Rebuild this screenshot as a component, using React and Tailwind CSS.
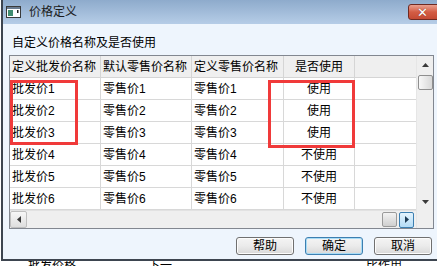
import React from 'react';

const rows = [
  ['批发价1', '零售价1', '零售价1', '使用'],
  ['批发价2', '零售价2', '零售价2', '使用'],
  ['批发价3', '零售价3', '零售价3', '使用'],
  ['批发价4', '零售价4', '零售价4', '不使用'],
  ['批发价5', '零售价5', '零售价5', '不使用'],
  ['批发价6', '零售价6', '零售价6', '不使用'],
];

const cols = ['w-[91px]', 'w-[91px]', 'w-[92px]', 'w-[71px]'];

const WinIcon = () => (
  <svg width="15" height="12" viewBox="0 0 15 12">
    <rect x="0.5" y="0.5" width="14" height="11" fill="#fff" stroke="#3a3a3a" />
    <rect x="1" y="1" width="13" height="2" fill="#6a7c90" />
    <rect x="2" y="4" width="5" height="6" fill="#3f8c70" />
    <rect x="11" y="4" width="1.5" height="3" fill="#222" />
  </svg>
);

const Btn = ({ children, primary }) => (
  <div
    className={`w-[58px] h-[18px] rounded-[3px] border flex items-center justify-center text-[12px] leading-none text-black bg-gradient-to-b from-[#f4f4f4] via-[#ebebeb] to-[#d8d8d8] ${
      primary ? 'border-[#3c7fb1] shadow-[inset_0_0_0_1px_#a8dcf6]' : 'border-[#707070] shadow-[inset_0_0_0_1px_#fcfcfc]'
    }`}
  >
    {children}
  </div>
);

export default function App() {
  return (
    <div className="w-[437px] h-[266px] overflow-hidden bg-white relative [font-family:'Liberation_Sans','Noto_Sans_CJK_SC',sans-serif] text-black">
      {/* Window */}
      <div className="ml-[1px] h-[261px] border-l-2 border-b-2 border-[#3d4550] flex flex-col">
        {/* Title bar */}
        <div className="h-[24px] shrink-0 relative flex items-center bg-gradient-to-b from-[#8eabcc] to-[#b6cde7]">
          <div className="ml-[3px]">
            <WinIcon />
          </div>
          <span className="ml-[8px] text-[12px] leading-none text-[#1b1b1b] mb-[1px]">价格定义</span>
          <div className="absolute left-[405px] top-[4px] w-[33px] h-[16px] rounded-[3px] border border-[#6f2a22] bg-gradient-to-b from-[#e9a08f] via-[#d35d45] to-[#c44a33] flex items-center justify-center">
            <span className="text-white text-[13px] font-bold leading-none [font-family:'DejaVu_Sans',sans-serif] [text-shadow:0_0_1px_#6a2a20] ml-[-4px]">✕</span>
          </div>
        </div>

        {/* Content */}
        <div className="flex-1 bg-[#eef5fd] pl-[6px] flex flex-col">
          <div className="mt-[12px] ml-[3px] text-[12px] leading-[14px]">自定义价格名称及是否使用</div>

          {/* Grid box */}
          <div className="mt-[5px] w-[425px] h-[174px] border border-[#828790] bg-white flex relative">
            <div className="w-[406px] flex flex-col">
              <div className="flex h-[22px] bg-[#efefef] border-b border-[#d5d5d5] text-[12px]">
                {['定义批发价名称', '默认零售价名称', '定义零售价名称', '是否使用'].map((h, i) => (
                  <div
                    key={h}
                    className={`${cols[i]} border-r border-[#d5d5d5] flex items-center ${i === 3 ? 'justify-center' : 'pl-[2px]'}`}
                  >
                    {h}
                  </div>
                ))}
              </div>
              {rows.map((r, ri) => (
                <div key={ri} className="flex h-[22px] border-b border-[#d8d8d8] text-[12px]">
                  {r.map((c, i) => (
                    <div
                      key={i}
                      className={`${cols[i]} border-r border-[#d8d8d8] flex items-center ${i === 3 ? 'justify-center' : 'pl-[2px]'}`}
                    >
                      {c}
                    </div>
                  ))}
                </div>
              ))}
              {/* Horizontal scrollbar */}
              <div className="mt-auto h-[18px] bg-[#efefef] border-t border-[#e2e2e2] flex items-center">
                <div className="ml-[0px] w-[17px] h-[17px] border border-[#bfbfbf] rounded-[2px] bg-gradient-to-b from-[#f7f7f7] to-[#dedede] flex items-center justify-center">
                  <svg width="4" height="7" viewBox="0 0 4 7"><path d="M4 0 L0 3.5 L4 7 Z" fill="#3a3a3a" /></svg>
                </div>
                <div className="flex-1" />
                <div className="w-[15px] h-[15px] border border-[#9a9a9a] rounded-[2px] bg-gradient-to-b from-[#f3f3f3] to-[#cfcfcf]" />
                <div className="ml-[2px] mr-[2px] w-[15px] h-[16px] border border-[#3c7fb1] rounded-[2px] bg-gradient-to-b from-[#e3f3fd] to-[#b4dcf6] flex items-center justify-center">
                  <svg width="4" height="7" viewBox="0 0 4 7"><path d="M0 0 L4 3.5 L0 7 Z" fill="#1d3b55" /></svg>
                </div>
              </div>
            </div>

            {/* Vertical scrollbar */}
            <div className="w-[17px] bg-[#efefef] border-l border-[#e6e6e6] flex flex-col items-center">
              <div className="h-[17px] flex items-center justify-center">
                <svg width="7" height="4" viewBox="0 0 7 4"><path d="M0 4 L3.5 0 L7 4 Z" fill="#3a3a3a" /></svg>
              </div>
              <div className="mt-[2px] w-[15px] h-[15px] border border-[#8f8f8f] rounded-[2px] bg-gradient-to-r from-[#f8f8f8] to-[#d8d8d8]" />
              <div className="flex-1" />
              <div className="h-[17px] flex items-center justify-center mb-[18px]">
                <svg width="7" height="4" viewBox="0 0 7 4"><path d="M0 0 L3.5 4 L7 0 Z" fill="#3a3a3a" /></svg>
              </div>
            </div>

            {/* Red highlight frames */}
            <div className="absolute left-[0px] top-[24px] w-[68px] h-[65px] border-[3px] border-[#f03a3a] pointer-events-none" />
            <div className="absolute left-[258px] top-[24px] w-[87px] h-[68px] border-[3px] border-[#f03a3a] pointer-events-none" />
          </div>

          {/* Buttons */}
          <div className="mt-[8px] flex justify-end gap-[11px] pr-[5px]">
            <Btn>帮助</Btn>
            <Btn primary>确定</Btn>
            <Btn>取消</Btn>
          </div>
        </div>
      </div>

      {/* Underlying window text peeking below */}
      <div className="h-[5px] overflow-hidden relative text-[12px]">
        <span className="absolute left-[28px] top-[-1px] leading-none">批发价格</span>
        <span className="absolute left-[148px] top-[-1px] leading-none">下一</span>
        <span className="absolute left-[366px] top-[-1px] leading-none">比作用</span>
      </div>
    </div>
  );
}
